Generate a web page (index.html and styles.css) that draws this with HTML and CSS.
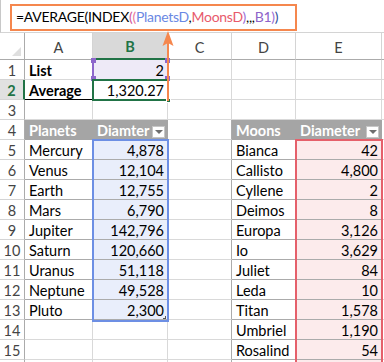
FILE: index.html
```html
<!DOCTYPE html>
<html>
<head>
<meta charset="utf-8">
<link rel="stylesheet" href="styles.css">
</head>
<body>
<div class="page">
  <div class="formula-bar">
    <div class="formula-box"><span class="fx">=AVERAGE(INDEX<span class="p1">(</span><span class="p2">(</span><span class="fb">PlanetsD</span>,<span class="fr">MoonsD</span><span class="p3">)</span>,,,<span class="fp">B1</span><span class="p3">)</span><span class="p4">)</span></span></div>
  </div>
  <div class="sheet">
    <div class="grid">
      <div class="corner"><span class="tri"></span></div><div class="ch">A</div><div class="ch sel-h">B</div><div class="ch">C</div><div class="ch">D</div><div class="ch">E</div><div class="ch last"></div>

      <div class="rh">1</div><div class="c b">List</div><div class="c num lav">2</div><div class="c"></div><div class="c"></div><div class="c"></div><div class="c last"></div>
      <div class="rh sel-r">2</div><div class="c b ul">Average</div><div class="c num">1,320.27</div><div class="c"></div><div class="c"></div><div class="c"></div><div class="c last"></div>
      <div class="rh">3</div><div class="c"></div><div class="c"></div><div class="c"></div><div class="c"></div><div class="c"></div><div class="c last"></div>
      <div class="rh">4</div><div class="th">Planets</div><div class="th">Diamter<span class="filter"></span></div><div class="c tr"></div><div class="th">Moons</div><div class="th">Diameter<span class="filter"></span></div><div class="c last"></div>

      <div class="rh">5</div><div class="t">Mercury</div><div class="t num blue">4,878</div><div class="c tr"></div><div class="t">Bianca</div><div class="t num red">42</div><div class="c last"></div>
      <div class="rh">6</div><div class="t">Venus</div><div class="t num blue">12,104</div><div class="c tr"></div><div class="t">Callisto</div><div class="t num red">4,800</div><div class="c last"></div>
      <div class="rh">7</div><div class="t">Earth</div><div class="t num blue">12,755</div><div class="c tr"></div><div class="t">Cyllene</div><div class="t num red">2</div><div class="c last"></div>
      <div class="rh">8</div><div class="t">Mars</div><div class="t num blue">6,790</div><div class="c tr"></div><div class="t">Deimos</div><div class="t num red">8</div><div class="c last"></div>
      <div class="rh">9</div><div class="t">Jupiter</div><div class="t num blue">142,796</div><div class="c tr"></div><div class="t">Europa</div><div class="t num red">3,126</div><div class="c last"></div>
      <div class="rh">10</div><div class="t">Saturn</div><div class="t num blue">120,660</div><div class="c tr"></div><div class="t">Io</div><div class="t num red">3,629</div><div class="c last"></div>
      <div class="rh">11</div><div class="t">Uranus</div><div class="t num blue">51,118</div><div class="c tr"></div><div class="t">Juliet</div><div class="t num red">84</div><div class="c last"></div>
      <div class="rh">12</div><div class="t">Neptune</div><div class="t num blue">49,528</div><div class="c tr"></div><div class="t">Leda</div><div class="t num red">10</div><div class="c last"></div>
      <div class="rh">13</div><div class="t">Pluto</div><div class="t num blue">2,300</div><div class="c tr"></div><div class="t">Titan</div><div class="t num red">1,578</div><div class="c last"></div>
      <div class="rh">14</div><div class="c"></div><div class="c"></div><div class="c tr"></div><div class="t">Umbriel</div><div class="t num red">1,190</div><div class="c last"></div>
      <div class="rh">15</div><div class="c"></div><div class="c"></div><div class="c tr"></div><div class="t">Rosalind</div><div class="t num red">54</div><div class="c last"></div>
      <div class="rh"></div><div class="c"></div><div class="c"></div><div class="c tr"></div><div class="t"></div><div class="t num red"></div><div class="c last"></div>
    </div>
    <div class="range purple"><i class="h tl"></i><i class="h tr2"></i><i class="h bl"></i><i class="h br"></i></div>
    <div class="range green"><i class="fill"></i></div>
    <div class="range blueR"><i class="corner-mark"></i></div>
    <div class="range redR"><i class="corner-mark"></i></div>
  </div>
  <svg class="arrow" width="20" height="76" viewBox="0 0 20 76">
    <line x1="10" y1="10" x2="10" y2="71" stroke="#F5874E" stroke-width="2"/>
    <polygon points="10,1 15.5,16 10,13 4.5,16" fill="#F5874E"/>
  </svg>
</div>
</body>
</html>
```

FILE: styles.css
```css
* { box-sizing: border-box; }
html, body { margin: 0; padding: 0; background: #fff; }
body { font-family: Lato, "Open Sans", sans-serif; color: #000; overflow: hidden; width: 384px; height: 362px; }
.page { position: relative; width: 384px; height: 362px; overflow: hidden; }

.formula-bar {
  height: 33px;
  border-left: 1px solid #C8C8C8;
  border-bottom: 1px solid #D4D4D4;
  padding: 4px 0 0 9px;
}
.formula-box {
  width: 287px;
  height: 27px;
  border: 2px solid #F5874E;
  padding: 0 0 0 4px;
  font-size: 14px;
  line-height: 22px;
  white-space: nowrap;
  overflow: hidden;
}
.fx { letter-spacing: -0.28px; }
.p1 { color: #D2559B; }
.p2 { color: #E8789A; }
.fb { color: #6A88E3; }
.fr { color: #E85A6C; }
.p3 { color: #9A6DD6; }
.fp { color: #8E63C9; }
.p4 { color: #2B4C9A; }

.sheet { position: relative; }
.grid {
  display: grid;
  grid-template-columns: 25px 68px 75px 64px 64px 86px 2px;
  grid-template-rows: 27px repeat(16, 20px);
  font-size: 14.5px;
}
.grid > div {
  border-right: 1px solid #D9D9D9;
  border-bottom: 1px solid #D9D9D9;
  display: flex;
  align-items: center;
  white-space: nowrap;
  overflow: hidden;
}
.corner { position: relative; border-right-color: #ABABAB !important; border-bottom-color: #ABABAB !important; }
.tri {
  position: absolute; right: 3px; bottom: 3px;
  width: 0; height: 0;
  border-left: 9px solid transparent;
  border-bottom: 9px solid #DFDFDF;
}
.ch {
  justify-content: center;
  color: #444;
  font-size: 14.5px;
  border-bottom-color: #ABABAB !important;
  border-right-color: #D4D4D4 !important;
  padding-top: 2px;
}
.ch.sel-h {
  background: #D9D9D9;
  color: #217346;
  font-weight: bold;
  border-bottom: 2px solid #217346 !important;
}
.rh {
  justify-content: center;
  color: #444;
  border-right-color: #ABABAB !important;
  border-bottom-color: #D4D4D4 !important;
  padding-top: 1px;
}
.rh.sel-r {
  background: #E1E1E1;
  color: #217346;
  font-weight: bold;
  border-right: 2px solid #217346 !important;
}
.c, .t, .th { padding: 1px 3px 0 4px; }
.b { font-weight: bold; }
.num { justify-content: flex-end; }
.ul { border-bottom: 1px solid #000 !important; }
.lav { background: #EEEAF7; }
.th {
  background: #A5A5A5;
  color: #fff;
  font-weight: bold;
  border-right-color: #A5A5A5 !important;
  border-bottom-color: #A5A5A5 !important;
  position: relative;
}
.filter {
  margin-left: auto;
  align-self: flex-end;
  margin-bottom: 1px;
  margin-right: -1px;
  width: 13px;
  height: 12px;
  background: #fff;
  border: 1px solid #C6C6C6;
  position: relative;
  flex: none;
}
.filter::after {
  content: "";
  position: absolute;
  left: 2px; top: 3px;
  border-left: 4px solid transparent;
  border-right: 4px solid transparent;
  border-top: 4px solid #6E6E6E;
}
.t { border-right-color: #ABABAB !important; border-bottom-color: #ABABAB !important; }
.tr { border-right-color: #ABABAB !important; }
.blue { background: #E9EEFB; }
.red { background: #FCEBEC; }
.last { border-right: none !important; }

.range { position: absolute; border: 2px solid; }
.purple { left: 92px; top: 26px; width: 77px; height: 21px; border-color: #8D67CB; border-top-color: transparent; border-bottom-color: transparent; }
.h { position: absolute; width: 5px; height: 5px; background: #8D67CB; }
.h.tl { left: -3px; top: -3px; }
.h.tr2 { right: -3px; top: -3px; }
.h.bl { left: -3px; bottom: -3px; }
.h.br { right: -3px; bottom: -3px; }
.green { left: 92px; top: 46px; width: 77px; height: 22px; border-color: #217346; }
.fill { position: absolute; right: -4px; bottom: -4px; width: 5px; height: 5px; background: #217346; border: 1px solid #fff; }
.blueR { left: 92px; top: 106px; width: 77px; height: 183px; border-color: #6D8FE4; }
.redR { left: 295px; top: 106px; width: 88px; height: 240px; border-color: #E5606B; }
.corner-mark { position: absolute; right: 1px; bottom: 1px; width: 3px; height: 3px; border-right: 1px solid #555; border-bottom: 1px solid #555; }

.arrow { position: absolute; left: 158px; top: 30px; }
```
